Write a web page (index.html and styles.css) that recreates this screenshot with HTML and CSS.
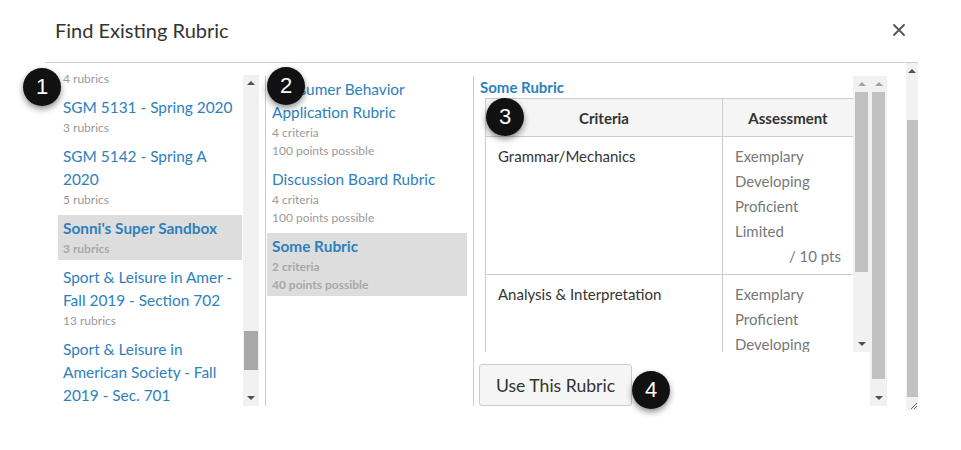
FILE: index.html
```html
<!DOCTYPE html>
<html lang="en">
<head>
<meta charset="utf-8">
<title>Find Existing Rubric</title>
<link rel="stylesheet" href="styles.css">
</head>
<body>
<div class="dialog">
  <header class="dlg-head">
    <h1 class="dlg-title">Find Existing Rubric</h1>
    <button class="dlg-close" aria-label="Close">
      <svg width="12" height="12" viewBox="0 0 12 12"><path d="M1 1 L11 11 M11 1 L1 11" stroke="#555" stroke-width="1.8" stroke-linecap="round"/></svg>
    </button>
  </header>
  <div class="dlg-body">
    <div class="panes">
      <div class="pane pane-contexts">
        <ul class="list ctx-list">
          <li class="item partial"><div class="sub">4 rubrics</div></li>
          <li class="item"><div class="name">SGM 5131 - Spring 2020</div><div class="sub">3 rubrics</div></li>
          <li class="item"><div class="name">SGM 5142 - Spring A 2020</div><div class="sub">5 rubrics</div></li>
          <li class="item selected"><div class="name">Sonni's Super Sandbox</div><div class="sub">3 rubrics</div></li>
          <li class="item"><div class="name">Sport &amp; Leisure in Amer - Fall 2019 - Section 702</div><div class="sub">13 rubrics</div></li>
          <li class="item"><div class="name">Sport &amp; Leisure in American Society - Fall 2019 - Sec. 701</div></li>
        </ul>
        <div class="sb sb-ctx">
          <span class="sb-arrow up"></span>
          <div class="sb-track"><div class="sb-thumb" style="margin-top:240px;height:39px"></div></div>
          <span class="sb-arrow down"></span>
        </div>
      </div>
      <div class="pane pane-rubrics">
        <ul class="list rub-list">
          <li class="item"><div class="name">Consumer Behavior Application Rubric</div><div class="sub">4 criteria</div><div class="sub">100 points possible</div></li>
          <li class="item"><div class="name">Discussion Board Rubric</div><div class="sub">4 criteria</div><div class="sub">100 points possible</div></li>
          <li class="item selected"><div class="name">Some Rubric</div><div class="sub">2 criteria</div><div class="sub">40 points possible</div></li>
        </ul>
      </div>
      <div class="pane pane-preview">
        <div class="preview-main">
          <div class="preview-box">
            <div class="preview-content">
              <h2 class="preview-title">Some Rubric</h2>
              <table class="rubric-table">
                <colgroup><col class="c-crit"><col class="c-assess"></colgroup>
                <thead><tr><th>Criteria</th><th>Assessment</th></tr></thead>
                <tbody>
                  <tr>
                    <td class="crit">Grammar/Mechanics</td>
                    <td class="assess"><div>Exemplary</div><div>Developing</div><div>Proficient</div><div>Limited</div><div class="pts">/ 10 pts</div></td>
                  </tr>
                  <tr>
                    <td class="crit">Analysis &amp; Interpretation</td>
                    <td class="assess"><div>Exemplary</div><div>Proficient</div><div>Developing</div></td>
                  </tr>
                </tbody>
              </table>
            </div>
            <div class="sb sb-inner">
              <span class="sb-arrow up off"></span>
              <div class="sb-track"><div class="sb-thumb" style="height:180px"></div></div>
              <span class="sb-arrow down"></span>
            </div>
          </div>
          <div class="actions"><button class="btn">Use This Rubric</button></div>
        </div>
        <div class="sb sb-inner">
          <span class="sb-arrow up off"></span>
          <div class="sb-track"><div class="sb-thumb" style="height:287px"></div></div>
          <span class="sb-arrow down"></span>
        </div>
      </div>
    </div>
    <div class="sb sb-outer">
      <span class="sb-arrow up"></span>
      <div class="sb-track"><div class="sb-thumb" style="margin-top:41px;height:277px"></div></div>
      <span class="grip"><svg width="9" height="9" viewBox="0 0 9 9"><path d="M8 2 L2 8 M8 5 L5 8" stroke="#666" stroke-width="1"/></svg></span>
    </div>
  </div>
</div>
<div class="badge b1">1</div>
<div class="badge b2">2</div>
<div class="badge b3">3</div>
<div class="badge b4">4</div>
</body>
</html>
```
FILE: styles.css
```css
* { box-sizing: border-box; }
html, body { margin: 0; padding: 0; background: #fff; }
body {
  width: 961px;
  height: 450px;
  overflow: hidden;
  position: relative;
  font-family: Lato, "Noto Sans", sans-serif;
  color: #333;
}
ul { list-style: none; margin: 0; padding: 0; }

.dialog { margin-left: 45px; width: 873px; }

.dlg-head {
  height: 62px;
  display: flex;
  align-items: center;
  justify-content: space-between;
  padding: 0 13px 2px 10px;
}
.dlg-title { margin: 0; font-size: 20px; font-weight: 400; color: #333; }
.dlg-close { border: 0; background: none; padding: 0; width: 12px; height: 12px; display: flex; }

.dlg-body {
  display: flex;
  height: 348px;
  border-top: 1px solid #cfcfcf;
}
.panes {
  flex: 1;
  display: flex;
  padding: 13px 0 4px 12px;
}
.pane { height: 330px; overflow: hidden; }

/* lists */
.item { padding: 2px 2px 2px 5px; margin-bottom: 4px; }
.item .name { font-size: 15.4px; line-height: 23px; color: #2c81bd; }
.item .sub { font-size: 12px; line-height: 18px; color: #9a9a9a; }
.item.selected { background: #dddddd; }
.item.selected .name { font-weight: 700; }
.item.selected .sub { font-weight: 700; color: #a8a8a8; }
.item.partial { margin-top: -4px; }

.pane-contexts { width: 202px; margin-right: 6px; display: flex; margin-top: -4px; height: 334px; }
.ctx-list { width: 186px; padding: 0 1px; overflow: hidden; }

.pane-rubrics { width: 208px; border-left: 1px solid #cccccc; padding-left: 1px; }
.rub-list { width: 200px; }

.pane-preview { width: 414px; border-left: 1px solid #cccccc; display: flex; margin-right: 18px; }
.preview-main { width: 396px; display: flex; flex-direction: column; }
.preview-box { height: 276px; display: flex; overflow: hidden; }
.preview-content { width: 379px; }
.preview-title {
  margin: 0;
  padding-left: 6px;
  font-size: 15px;
  line-height: 22px;
  font-weight: 700;
  color: #2c81bd;
}
.rubric-table {
  margin-left: 11px;
  width: 368px;
  border-collapse: collapse;
  table-layout: fixed;
  font-size: 15px;
}
.c-crit { width: 237px; }
.c-assess { width: 131px; }
.rubric-table th, .rubric-table td { border: 1px solid #cdcdcd; }
.rubric-table th {
  background: #f5f5f5;
  height: 38px;
  padding: 0;
  font-weight: 700;
  color: #333;
  text-align: center;
}
.rubric-table td {
  vertical-align: top;
  padding: 7px 12px 5px;
  line-height: 25px;
}
.rubric-table td.crit { color: #333; }
.rubric-table td.assess { color: #777; }
.rubric-table .pts { text-align: right; }

.actions { padding: 12px 0 0 5px; }
.btn {
  width: 153px;
  height: 42px;
  border: 1px solid #c7cdd1;
  border-radius: 3px;
  background: #f5f5f5;
  font-family: Lato, "Noto Sans", sans-serif;
  font-size: 17.6px;
  color: #333;
  padding: 0;
}

/* scrollbars */
.sb { flex: none; display: flex; flex-direction: column; background: #f1f1f1; width: 17px; }
.sb-arrow { flex: none; height: 16px; display: flex; align-items: center; justify-content: center; }
.sb-arrow::before {
  content: "";
  border-left: 4px solid transparent;
  border-right: 4px solid transparent;
}
.sb-arrow.up::before { border-bottom: 4px solid #505050; }
.sb-arrow.down::before { border-top: 4px solid #505050; }
.sb-arrow.up.off::before { border-bottom-color: #a3a3a3; }
.sb-track { flex: 1; padding: 0 2px; }
.sb-thumb { background: #c1c1c1; }

.sb-ctx { width: 16px; margin-top: 3px; }
.sb-ctx .sb-track { padding: 0 1px; }
.sb-ctx .sb-thumb { background: #a8a8a8; }

.sb-outer { width: 12px; }
.sb-outer .sb-track { padding: 0 0 0 1px; }
.grip { flex: none; height: 12px; display: flex; align-items: flex-end; justify-content: flex-end; background: #f1f1f1; }

/* step badges */
.badge {
  position: absolute;
  width: 38px;
  height: 38px;
  border-radius: 50%;
  background: #111;
  color: #fff;
  font-family: "Liberation Sans", Arial, sans-serif;
  font-size: 22px;
  line-height: 38px;
  text-align: center;
  box-shadow: 0 3px 6px rgba(0, 0, 0, 0.45);
}
.b1 { left: 23px; top: 68px; }
.b2 { left: 267px; top: 67px; }
.b3 { left: 486px; top: 98px; }
.b4 { left: 632px; top: 371px; }
```
